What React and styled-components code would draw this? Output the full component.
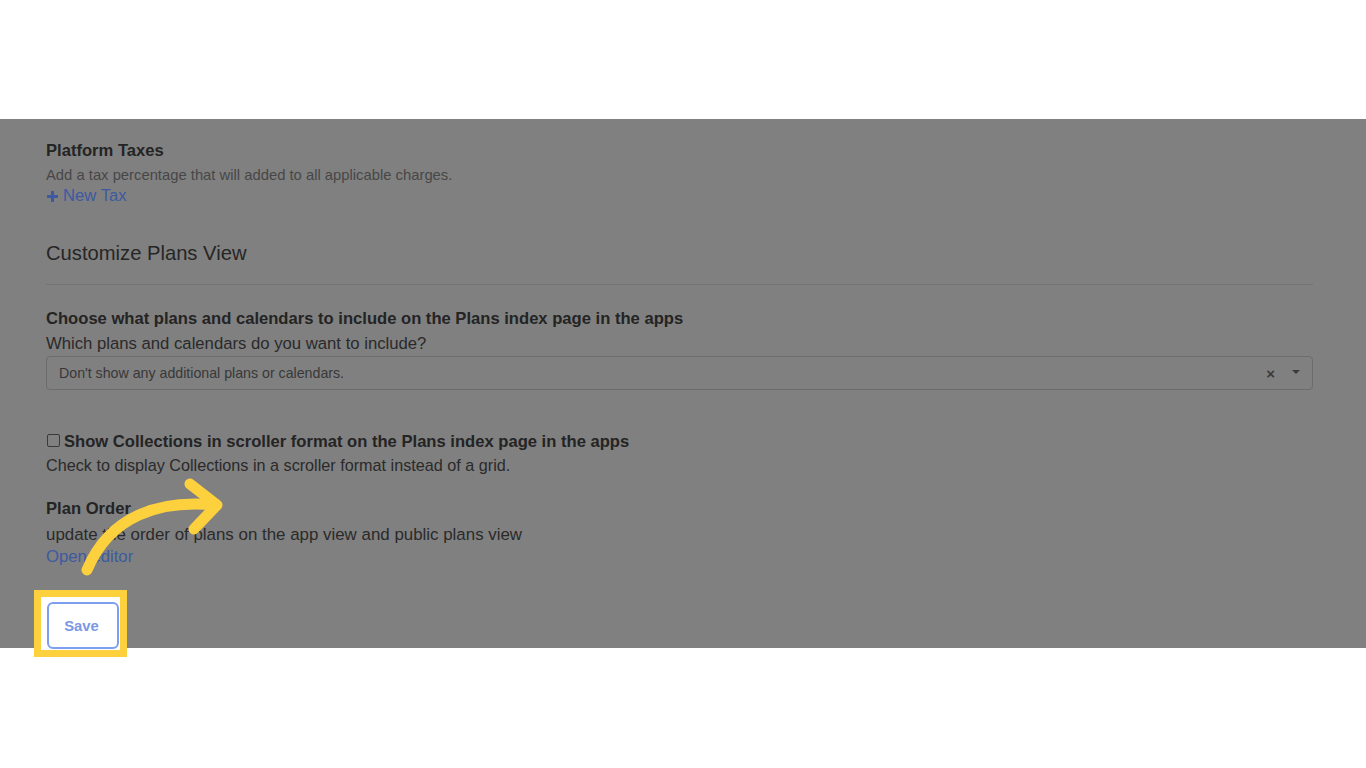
import React from 'react'
import styled, { createGlobalStyle } from 'styled-components'

const GlobalStyle = createGlobalStyle`
    html, body {
        margin: 0;
        padding: 0;
        background: #ffffff;
    }
    body {
        font-family: "Liberation Sans", Arial, Helvetica, sans-serif;
        width: 1366px;
        height: 768px;
        overflow: hidden;
    }
`

const Page = styled.div`
    position: relative;
    width: 1366px;
    height: 768px;
    padding-top: 119px;
    box-sizing: border-box;
`

const Dimmed = styled.section`
    height: 529px;
    box-sizing: border-box;
    padding: 22px 53px 0 46px;
    background: #808080;
    display: flex;
    flex-direction: column;

    & > * {
        flex-shrink: 0;
    }
`

const Label = styled.div`
    font-size: 16.6px;
    line-height: 20px;
    font-weight: bold;
    color: #242424;
    margin-top: ${p => p.$gap || 0}px;
`

const Help = styled.div`
    font-size: ${p => p.$size || 16.7}px;
    line-height: 20px;
    color: ${p => p.$muted ? '#474747' : '#2a2a2a'};
    margin-top: ${p => p.$gap || 0}px;
`

const Link = styled.a`
    display: flex;
    align-items: center;
    gap: 4px;
    font-size: 16.7px;
    line-height: 20px;
    color: #3d5aa0;
    text-decoration: none;
    margin-top: ${p => p.$gap || 0}px;
`

const SectionTitle = styled.h2`
    margin: 35px 0 0;
    font-size: 20.2px;
    line-height: 24px;
    font-weight: normal;
    color: #262626;
`

const Divider = styled.hr`
    margin: 19px 0 0;
    border: 0;
    border-top: 1px solid #747474;
`

const Select = styled.div`
    margin-top: 2px;
    height: 34px;
    box-sizing: border-box;
    border: 1px solid #6c6c6c;
    border-radius: 4px;
    display: flex;
    align-items: center;
    padding: 0 12px;
    font-size: 14.2px;
    color: #383838;
`

const SelectText = styled.span`
    flex: 1;
`

const Clear = styled.span`
    font-size: 15px;
    font-weight: bold;
    color: #3a3a3a;
    margin-right: 17px;
`

const Caret = styled.span`
    width: 0;
    height: 0;
    border-left: 4px solid transparent;
    border-right: 4px solid transparent;
    border-top: 4px solid #3a3a3a;
    margin-top: -2px;
`

const CheckRow = styled.label`
    display: flex;
    align-items: center;
    gap: 4px;
    margin-top: 42px;
    font-size: 16.6px;
    line-height: 20px;
    font-weight: bold;
    color: #242424;
`

const Box = styled.span`
    width: 11px;
    height: 11px;
    margin-left: 1px;
    margin-top: -4px;
    border: 1px solid #3a3a3a;
    border-radius: 2px;
    background: #808080;
    flex: none;
`

const Highlight = styled.div`
    align-self: flex-start;
    margin: 23px 0 0 -12px;
    border: 7px solid #fdd03e;
    background: #ffffff;
    padding: 5px 1px 1px 6px;
`

const SaveButton = styled.button`
    display: block;
    width: 72px;
    height: 47px;
    padding: 0 0 0 0;
    border: 2px solid #7e9ef0;
    border-radius: 6px;
    background: #ffffff;
    color: #7b98e6;
    font-family: "Liberation Sans", Arial, sans-serif;
    font-size: 14.8px;
    font-weight: bold;
    text-indent: -3px;
`

const Arrow = styled.svg`
    position: absolute;
    left: 0;
    top: 0;
    pointer-events: none;
`

export default function App() {
    return (
        <Page>
            <GlobalStyle />
            <Dimmed>
                <Label>Platform Taxes</Label>
                <Help $muted $size={14.8} $gap={4}>Add a tax percentage that will added to all applicable charges.</Help>
                <Link $gap={1}>
                    <svg width="13" height="13" viewBox="0 0 13 13">
                        <path d="M6.5 1v11M1 6.5h11" stroke="#3d5aa0" strokeWidth="3" />
                    </svg>
                    New Tax
                </Link>

                <SectionTitle>Customize Plans View</SectionTitle>
                <Divider />

                <Label $gap={24}>Choose what plans and calendars to include on the Plans index page in the apps</Label>
                <Help $gap={5}>Which plans and calendars do you want to include?</Help>
                <Select>
                    <SelectText>Don't show any additional plans or calendars.</SelectText>
                    <Clear>×</Clear>
                    <Caret />
                </Select>

                <CheckRow>
                    <Box />
                    Show Collections in scroller format on the Plans index page in the apps
                </CheckRow>
                <Help $size={16.2} $gap={3}>Check to display Collections in a scroller format instead of a grid.</Help>

                <Label $gap={24}>Plan Order</Label>
                <Help $size={16.9} $gap={6}>update the order of plans on the app view and public plans view</Help>
                <Link $gap={2}>Open editor</Link>

                <Highlight>
                    <SaveButton>Save</SaveButton>
                </Highlight>
            </Dimmed>

            <Arrow width="1366" height="768" viewBox="0 0 1366 768">
                <path d="M87 570 C110 515 160 500 214 505" fill="none" stroke="#fdd03e" strokeWidth="11" strokeLinecap="round" />
                <path d="M190 484 L217 505 L194 529" fill="none" stroke="#fdd03e" strokeWidth="11" strokeLinecap="round" strokeLinejoin="round" />
            </Arrow>
        </Page>
    )
}
